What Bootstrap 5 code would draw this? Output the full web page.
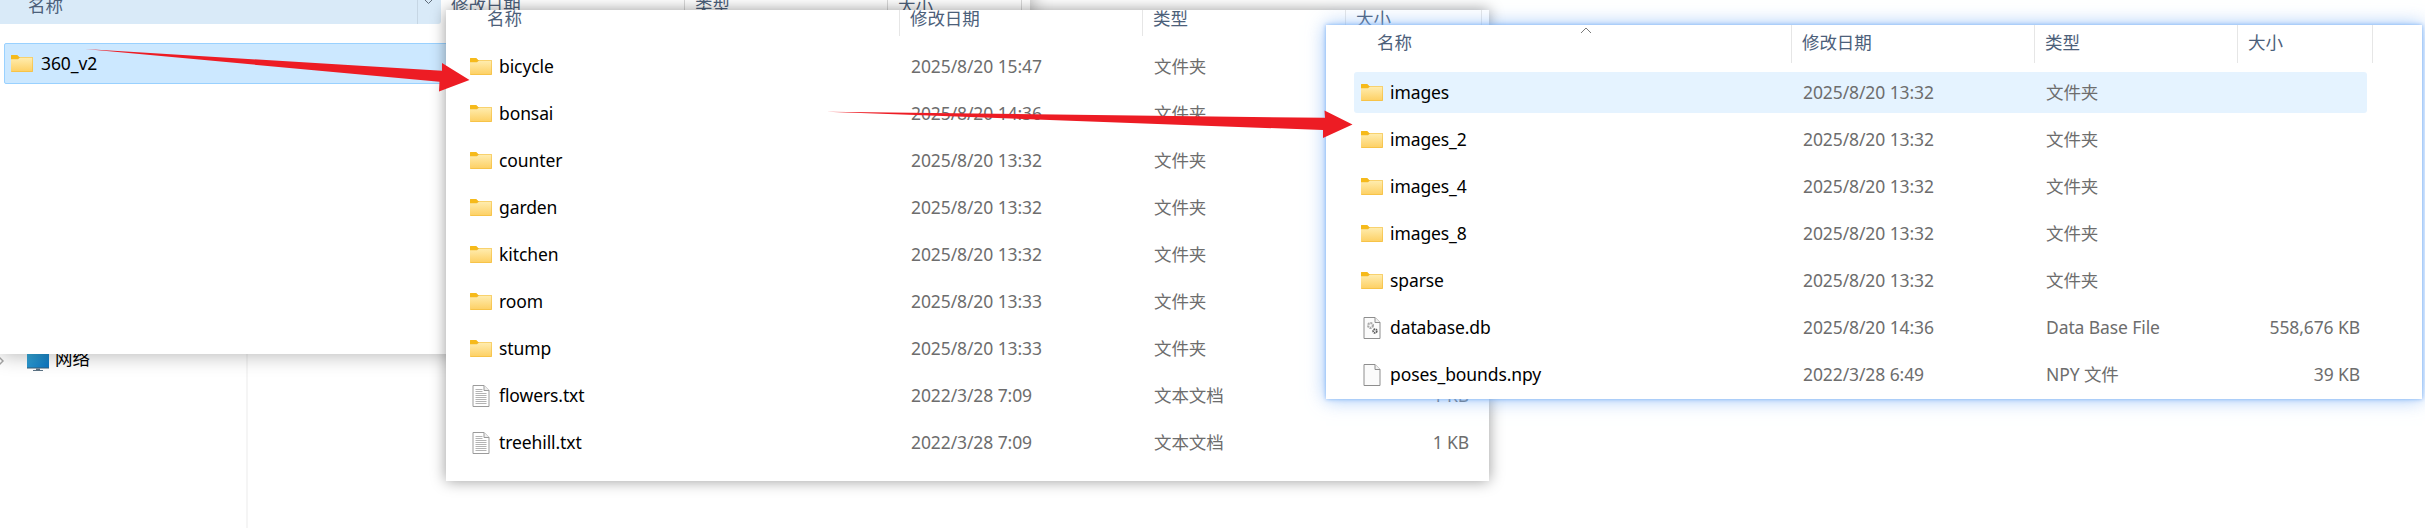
<!DOCTYPE html>
<html lang="zh-CN">
<head>
<meta charset="utf-8">
<title>360_v2</title>
<link href="https://cdn.jsdelivr.net/npm/bootstrap@5.3.0/dist/css/bootstrap.min.css" rel="stylesheet">
<style>
html,body{margin:0;height:528px;overflow:hidden;background:#fff}
.desk{width:2425px;height:528px;overflow:hidden;font-family:"Noto Sans","Noto Sans CJK SC",sans-serif;font-size:17.5px;line-height:1;background:#fff;letter-spacing:-.1px}
.explorer{background:#fff}
.ex-back{left:0;top:-14px;width:1030px;height:368px;box-shadow:0 0 20px rgba(0,0,0,.32)}
.ex-mid{left:446px;top:10px;width:1043px;height:471px;box-shadow:0 0 14px rgba(0,0,0,.4)}
.ex-front{left:1326px;top:25px;width:1096px;height:374px;box-shadow:0 0 4px rgba(120,175,245,.95),0 0 18px rgba(120,175,245,.75)}
.hdr{height:38px;color:#4c607a}
.hcell{border-right:1px solid #e6e6e6;padding-left:10px;height:100%}
.ex-back .hdr{padding-top:8px;height:38px}
.ex-back .hcell{padding-top:3px;border-color:#d9d9d9}
.band{background:#d9eaf8;border-bottom-right-radius:3px;margin-top:-8px;padding:11px 0 0 28px;position:relative;width:441px;flex:none}
.band .hsep{position:absolute;left:417px;top:0;bottom:0;border-left:1px solid #c6d6e4}
.band svg{position:absolute;left:423px;top:12px}
.ex-mid .hdr{height:26px;padding-left:12px}
.ex-mid .hcell{padding-top:0}
.ex-front .hdr{height:38px;padding-left:28px}
.ex-front .hcell{padding-top:9px}
.c-name-m{width:442px;flex:none}
.c-date-m{width:243px;flex:none}
.c-type-m{width:203px;flex:none}
.c-size-m{width:136px;flex:none}
.c-name-f{width:438px;flex:none}
.c-date-f{width:243px;flex:none}
.c-type-f{width:203px;flex:none}
.c-size-f{width:135px;flex:none}
.ex-mid .hdr .c-name-m{padding-left:29px}
.ex-front .hdr .c-name-f{padding-left:23px}
.rows-mid{margin-top:10px;padding-left:12px;gap:6px}
.rows-front{margin-top:9px;padding-left:28px;gap:6px}
.frow{height:41px;color:#000}
.frow.is-hover{background:#e5f3ff;border-radius:3px;width:1013px}
.frow .ico{width:22px;margin:0 7px 0 0;flex:none}
.cname{padding-left:12px}
.ex-front .cname{padding-left:7px}
.cdate,.ctype,.csize{color:#6d6d6d}
.cdate,.ctype{padding-left:11px}
.csize{padding-right:13px;text-align:right}
.sel-row{background:#cce8ff;border:1px solid #99d1ff;border-radius:2px;margin:19px 0 0 4px;height:41px;padding-left:6px;width:1000px;color:#000}
.sel-row .ico{margin-right:8px}
.netitem{left:27px;top:354px;color:#000;height:18px;overflow:hidden}
.netitem span{margin-top:-4px;margin-left:6px}
.side-sep{left:246px;top:354px;width:2px;height:174px;background:#f5f5f5}
.side-chev{left:-2px;top:356px}
.overlay{left:0;top:0;pointer-events:none}
.sortup{left:254px;top:2px}
</style>
</head>
<body>
<svg width="0" height="0" class="position-absolute">
  <defs>
    <linearGradient id="fg" x1="0" y1="0" x2="0" y2="1"><stop offset="0" stop-color="#ffedb0"/><stop offset="1" stop-color="#fdd064"/></linearGradient>
    <linearGradient id="mg" x1="0" y1="0" x2="1" y2="1"><stop offset="0" stop-color="#3fb4de"/><stop offset="1" stop-color="#0a72bf"/></linearGradient>
    <symbol id="folder" viewBox="0 0 22 17">
      <path d="M0 1a1 1 0 0 1 1-1h5l2 2h13a1 1 0 0 1 1 1v13a1 1 0 0 1-1 1H1a1 1 0 0 1-1-1z" fill="#f1b62c"/>
      <path d="M0 1a1 1 0 0 1 1-1h5l2 2-2 2.200H0z" fill="#f6ba1a"/>
      <path d="M0 4.200h7l2-1.700h12.500v13.500a.5.5 0 0 1-.5.500H.6a.6.6 0 0 1-.6-.6z" fill="url(#fg)"/>
    </symbol>
    <symbol id="txtfile" viewBox="0 0 17 22">
      <path d="M.5.500h11l5 5v16H.5z" fill="#fff" stroke="#9b9b9b"/>
      <path d="M11.500.500v5h5" fill="#eee" stroke="#9b9b9b"/>
      <path d="M3 4.500h7M3 6.500h7M3 8.500h11M3 10.500h11M3 12.500h11M3 14.500h11M3 16.500h11M3 18.500h11" stroke="#b3b3b3"/>
    </symbol>
    <symbol id="blank" viewBox="0 0 17 22">
      <path d="M.5.500h11l5 5v16H.5z" fill="#fbfbfb" stroke="#8e8e8e"/>
      <path d="M11.500.500v5h5" fill="#f1f1f1" stroke="#8e8e8e"/>
    </symbol>
    <symbol id="dbfile" viewBox="0 0 17 22">
      <path d="M.5.500h11l5 5v16H.5z" fill="#fbfbfb" stroke="#8e8e8e"/>
      <path d="M11.500.500v5h5" fill="#f1f1f1" stroke="#8e8e8e"/>
      <circle cx="7" cy="8.500" r="2.400" fill="none" stroke="#a9a9a9" stroke-width="2.200" stroke-dasharray="1.800 .7"/>
      <circle cx="11.500" cy="14" r="1.800" fill="none" stroke="#5d5d5d" stroke-width="1.800" stroke-dasharray="1.500 .6"/>
    </symbol>
  </defs>
</svg>

<div class="desk position-relative">
  <div class="netitem position-absolute d-flex">
    <svg width="22" height="18" viewBox="0 0 22 18" class="flex-none"><rect x="0" y="-6" width="22" height="20" fill="url(#mg)"/><rect x="0" y="13.500" width="22" height="1" fill="#3c6078"/><path d="M9 14.500h4v1.500h3v1H6v-1h3z" fill="#5c7284"/></svg>
    <span>网络</span>
  </div>
  <div class="side-sep position-absolute"></div>
  <svg class="side-chev position-absolute" width="6" height="10" viewBox="0 0 6 10"><path d="M1 1l4 4-4 4" fill="none" stroke="#a6a6a6" stroke-width="1.500"/></svg>

  <section class="explorer ex-back position-absolute">
    <div class="hdr d-flex">
      <div class="band">名称<span class="hsep"></span><svg width="11" height="7" viewBox="0 0 11 7"><path d="M1 1l4.500 4.500L10 1" fill="none" stroke="#5f6b78"/></svg></div>
      <div class="hcell" style="width:244px">修改日期</div>
      <div class="hcell" style="width:203px">类型</div>
      <div class="hcell" style="width:134px">大小</div>
    </div>
    <div class="sel-row d-flex align-items-center">
      <svg class="ico" width="22" height="17"><use href="#folder"/></svg><span>360_v2</span>
    </div>
  </section>

  <section class="explorer ex-mid position-absolute">
    <div class="hdr d-flex">
      <div class="hcell c-name-m">名称</div>
      <div class="hcell c-date-m">修改日期</div>
      <div class="hcell c-type-m">类型</div>
      <div class="hcell c-size-m">大小</div>
    </div>
    <div class="rows-mid d-flex flex-column">
      <div class="frow d-flex align-items-center"><div class="c-name-m cname d-flex align-items-center"><svg class="ico" width="22" height="17"><use href="#folder"/></svg>bicycle</div><div class="c-date-m cdate">2025/8/20 15:47</div><div class="c-type-m ctype">文件夹</div></div>
      <div class="frow d-flex align-items-center"><div class="c-name-m cname d-flex align-items-center"><svg class="ico" width="22" height="17"><use href="#folder"/></svg>bonsai</div><div class="c-date-m cdate">2025/8/20 14:36</div><div class="c-type-m ctype">文件夹</div></div>
      <div class="frow d-flex align-items-center"><div class="c-name-m cname d-flex align-items-center"><svg class="ico" width="22" height="17"><use href="#folder"/></svg>counter</div><div class="c-date-m cdate">2025/8/20 13:32</div><div class="c-type-m ctype">文件夹</div></div>
      <div class="frow d-flex align-items-center"><div class="c-name-m cname d-flex align-items-center"><svg class="ico" width="22" height="17"><use href="#folder"/></svg>garden</div><div class="c-date-m cdate">2025/8/20 13:32</div><div class="c-type-m ctype">文件夹</div></div>
      <div class="frow d-flex align-items-center"><div class="c-name-m cname d-flex align-items-center"><svg class="ico" width="22" height="17"><use href="#folder"/></svg>kitchen</div><div class="c-date-m cdate">2025/8/20 13:32</div><div class="c-type-m ctype">文件夹</div></div>
      <div class="frow d-flex align-items-center"><div class="c-name-m cname d-flex align-items-center"><svg class="ico" width="22" height="17"><use href="#folder"/></svg>room</div><div class="c-date-m cdate">2025/8/20 13:33</div><div class="c-type-m ctype">文件夹</div></div>
      <div class="frow d-flex align-items-center"><div class="c-name-m cname d-flex align-items-center"><svg class="ico" width="22" height="17"><use href="#folder"/></svg>stump</div><div class="c-date-m cdate">2025/8/20 13:33</div><div class="c-type-m ctype">文件夹</div></div>
      <div class="frow d-flex align-items-center"><div class="c-name-m cname d-flex align-items-center"><svg class="ico" width="22" height="22"><use href="#txtfile"/></svg>flowers.txt</div><div class="c-date-m cdate">2022/3/28 7:09</div><div class="c-type-m ctype">文本文档</div><div class="c-size-m csize">1 KB</div></div>
      <div class="frow d-flex align-items-center"><div class="c-name-m cname d-flex align-items-center"><svg class="ico" width="22" height="22"><use href="#txtfile"/></svg>treehill.txt</div><div class="c-date-m cdate">2022/3/28 7:09</div><div class="c-type-m ctype">文本文档</div><div class="c-size-m csize">1 KB</div></div>
    </div>
  </section>

  <section class="explorer ex-front position-absolute">
    <svg class="sortup position-absolute" width="12" height="7" viewBox="0 0 12 7"><path d="M1 6l5-5 5 5" fill="none" stroke="#7a7a7a"/></svg>
    <div class="hdr d-flex">
      <div class="hcell c-name-f">名称</div>
      <div class="hcell c-date-f">修改日期</div>
      <div class="hcell c-type-f">类型</div>
      <div class="hcell c-size-f">大小</div>
    </div>
    <div class="rows-front d-flex flex-column">
      <div class="frow is-hover d-flex align-items-center"><div class="c-name-f cname d-flex align-items-center"><svg class="ico" width="22" height="17"><use href="#folder"/></svg>images</div><div class="c-date-f cdate">2025/8/20 13:32</div><div class="c-type-f ctype">文件夹</div></div>
      <div class="frow d-flex align-items-center"><div class="c-name-f cname d-flex align-items-center"><svg class="ico" width="22" height="17"><use href="#folder"/></svg>images_2</div><div class="c-date-f cdate">2025/8/20 13:32</div><div class="c-type-f ctype">文件夹</div></div>
      <div class="frow d-flex align-items-center"><div class="c-name-f cname d-flex align-items-center"><svg class="ico" width="22" height="17"><use href="#folder"/></svg>images_4</div><div class="c-date-f cdate">2025/8/20 13:32</div><div class="c-type-f ctype">文件夹</div></div>
      <div class="frow d-flex align-items-center"><div class="c-name-f cname d-flex align-items-center"><svg class="ico" width="22" height="17"><use href="#folder"/></svg>images_8</div><div class="c-date-f cdate">2025/8/20 13:32</div><div class="c-type-f ctype">文件夹</div></div>
      <div class="frow d-flex align-items-center"><div class="c-name-f cname d-flex align-items-center"><svg class="ico" width="22" height="17"><use href="#folder"/></svg>sparse</div><div class="c-date-f cdate">2025/8/20 13:32</div><div class="c-type-f ctype">文件夹</div></div>
      <div class="frow d-flex align-items-center"><div class="c-name-f cname d-flex align-items-center"><svg class="ico" width="22" height="22"><use href="#dbfile"/></svg>database.db</div><div class="c-date-f cdate">2025/8/20 14:36</div><div class="c-type-f ctype">Data Base File</div><div class="c-size-f csize">558,676 KB</div></div>
      <div class="frow d-flex align-items-center"><div class="c-name-f cname d-flex align-items-center"><svg class="ico" width="22" height="22"><use href="#blank"/></svg>poses_bounds.npy</div><div class="c-date-f cdate">2022/3/28 6:49</div><div class="c-type-f ctype">NPY 文件</div><div class="c-size-f csize">39 KB</div></div>
    </div>
  </section>

  <svg class="overlay position-absolute" width="2425" height="528" viewBox="0 0 2425 528">
    <polygon fill="#ed1c24" points="85,49 442,70.700 442,63 469.500,80 439,91.600 439.500,81.800"/>
    <polygon fill="#ed1c24" points="826.500,111.800 1325,117.800 1324.500,110.400 1352.500,124.600 1323,138 1323,130"/>
  </svg>
</div>
<script src="https://cdn.jsdelivr.net/npm/bootstrap@5.3.0/dist/js/bootstrap.bundle.min.js"></script>
</body>
</html>
